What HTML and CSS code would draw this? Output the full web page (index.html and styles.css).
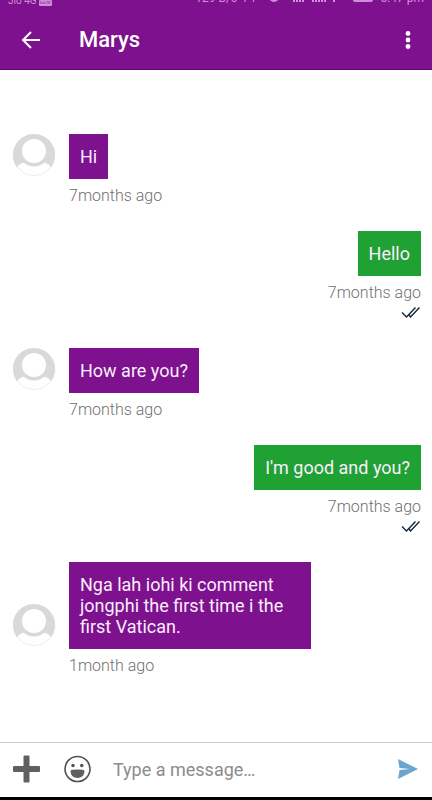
FILE: index.html
```
<!DOCTYPE html>
<html lang="en">
<head>
<meta charset="utf-8">
<meta name="viewport" content="width=device-width, initial-scale=1">
<title>Marys</title>
<link rel="stylesheet" href="styles.css">
</head>
<body>
<svg class="defs" aria-hidden="true">
  <symbol id="avatar" viewBox="0 0 42 42">
    <circle cx="21" cy="21" r="20.5" fill="#fff" stroke="#ededed"/>
    <path d="M21 0A21 21 0 0 0 4 33.500Q6 30 10.500 28.500Q15 32.500 21 32.500Q27 32.500 31.500 28.500Q36 30 38 33.500A21 21 0 0 0 21 0Z" fill="#d9d9d9"/>
    <circle cx="21" cy="17" r="12" fill="#fff"/>
  </symbol>
  <symbol id="ticks" viewBox="0 0 20 12">
    <path d="M1 6.500L5.500 11L14.500 1.500M7.500 8L9.500 11L18.500 1.500" fill="none" stroke="#14283c" stroke-width="1.400"/>
  </symbol>
</svg>
<header class="header">
  <div class="status">
    <div class="status-text"><span>Jio 4G</span><span class="volte">VoLTE</span></div>
    <div class="status-text status-right">
      <span class="speed">129 B/s 4 1</span>
      <svg class="alarm" viewBox="0 0 10 10" aria-hidden="true"><circle cx="5" cy="5" r="5" fill="currentColor"/></svg>
      <svg class="signal" viewBox="0 0 46 10" aria-hidden="true"><path d="M1 10V7M4 10V5M7 10V3M10 10V1M20 10V7M23 10V5M26 10V3M29 10V1M32 10V3M41 10V7" stroke="currentColor" stroke-width="2"/></svg>
      <svg class="battery" viewBox="0 0 20 10" aria-hidden="true"><rect width="20" height="10" rx="2" fill="currentColor"/></svg>
      <span>5:47 pm</span>
    </div>
  </div>
  <div class="toolbar">
    <button class="icon-button" aria-label="Back">
      <svg width="20" height="20" viewBox="0 0 20 20"><path d="M19 10H2.500M10 2L2 10L10 18" fill="none" stroke="#fff" stroke-width="2"/></svg>
    </button>
    <h1 class="title">Marys</h1>
    <button class="icon-button" aria-label="More options">
      <svg width="6" height="20" viewBox="0 0 6 20" fill="#fff"><circle cx="3" cy="3.500" r="2.400"/><circle cx="3" cy="10" r="2.400"/><circle cx="3" cy="16.500" r="2.400"/></svg>
    </button>
  </div>
</header>
<main class="chat">
  <article class="message incoming">
    <svg class="avatar" role="img" aria-label="Marys"><use href="#avatar"/></svg>
    <p class="bubble">Hi</p>
    <time class="time">7months ago</time>
  </article>
  <article class="message outgoing">
    <p class="bubble">Hello</p>
    <time class="time">7months ago</time>
    <svg class="ticks" role="img" aria-label="Read"><use href="#ticks"/></svg>
  </article>
  <article class="message incoming">
    <svg class="avatar" role="img" aria-label="Marys"><use href="#avatar"/></svg>
    <p class="bubble">How are you?</p>
    <time class="time">7months ago</time>
  </article>
  <article class="message outgoing">
    <p class="bubble">I'm good and you?</p>
    <time class="time">7months ago</time>
    <svg class="ticks" role="img" aria-label="Read"><use href="#ticks"/></svg>
  </article>
  <article class="message incoming">
    <svg class="avatar" role="img" aria-label="Marys"><use href="#avatar"/></svg>
    <p class="bubble">Nga lah iohi ki comment jongphi the first time i the first Vatican.</p>
    <time class="time">1month ago</time>
  </article>
</main>
<form class="composer">
  <button class="icon-button" type="button" aria-label="Add attachment">
    <svg width="28" height="28" viewBox="0 0 28 28"><path d="M10.500 1.500Q10.500 .5 11.500 .5H15.500Q16.500 .5 16.500 1.500V11H26Q27 11 27 12V16Q27 17 26 17H16.500V26.500Q16.500 27.500 15.500 27.500H11.500Q10.500 27.500 10.500 26.500V17H1Q0 17 0 16V12Q0 11 1 11H10.500Z" fill="#606060"/></svg>
  </button>
  <button class="icon-button" type="button" aria-label="Insert emoji">
    <svg width="28" height="28" viewBox="0 0 28 28"><circle cx="13.500" cy="14" r="12.500" fill="none" stroke="#505050" stroke-width="1.600"/><circle cx="9" cy="10.500" r="1.700" fill="#505050"/><circle cx="17.800" cy="10.500" r="1.700" fill="#505050"/><path d="M6.500 16.500Q6.500 14.800 8.500 14.800Q13.500 14.200 18.500 14.800Q20.500 14.800 20.500 16.500Q20 23 13.500 23Q7 23 6.500 16.500Z" fill="#606060"/></svg>
  </button>
  <input class="field" type="text" placeholder="Type a message…" aria-label="Message">
  <button class="icon-button" aria-label="Send">
    <svg width="20" height="20" viewBox="0 0 20 20"><path d="M0 0L20 10L0 20L1.500 11L12 10L1.500 9Z" fill="#6ba4cf"/></svg>
  </button>
</form>
</body>
</html>
```
FILE: styles.css
```
* {
  box-sizing: border-box;
}

body {
  display: flex;
  flex-direction: column;
  min-height: 100vh;
  margin: 0;
  background: #fff;
  color: #707070;
  font-family: Roboto, "Liberation Sans", sans-serif;
}

.defs {
  position: absolute;
  width: 0;
  height: 0;
}

.header {
  background: #7e118e;
  border-bottom: 1px solid #5c0a69;
  color: #fff;
}

.status {
  display: flex;
  align-items: flex-end;
  justify-content: space-between;
  height: 6px;
  padding: 0 8px;
  overflow: hidden;
  color: #cf8fd8;
  font-size: 10px;
  line-height: 10px;
}

.status-text {
  display: flex;
  align-items: flex-end;
  gap: 2px;
  white-space: nowrap;
}

.status-right {
  height: 12px;
  margin-bottom: 4px;
  font-size: 12px;
  line-height: 8px;
}

.speed {
  margin-right: 10px;
}

.volte {
  padding: 0 1px;
  border-radius: 1px;
  background: #cf8fd8;
  color: #7e118e;
  font-size: 4px;
  line-height: 6px;
}

.alarm {
  width: 10px;
  height: 10px;
}

.signal {
  width: 46px;
  height: 10px;
  margin: 0 12px;
}

.battery {
  width: 20px;
  height: 10px;
  margin-right: 6px;
}

.toolbar {
  display: flex;
  align-items: center;
  height: 63px;
  padding: 5px 21px 0;
}

.title {
  flex: 1;
  margin: 0 0 0 38px;
  font-size: 22px;
  font-weight: 500;
  line-height: 24px;
}

.icon-button {
  display: flex;
  flex: none;
  padding: 0;
  border: 0;
  background: none;
  cursor: pointer;
}

.chat {
  display: flex;
  flex: 1;
  flex-direction: column;
  gap: 26px;
  padding: 64px 11px 24px 13px;
}

.message {
  display: grid;
  row-gap: 7px;
}

.incoming {
  grid-template-columns: 42px 1fr;
  column-gap: 14px;
  justify-items: start;
}

.incoming .time {
  grid-column: 2;
}

.outgoing {
  justify-items: end;
}

.avatar {
  align-self: end;
  width: 42px;
  height: 42px;
  margin-bottom: 3px;
}

.bubble {
  max-width: 242px;
  margin: 0;
  padding: 12px 11px;
  background: #7e118e;
  color: #fbeefd;
  font-size: 18px;
  line-height: 21px;
}

.outgoing .bubble {
  background: #1fa233;
}

.time {
  font-size: 16px;
  font-weight: 300;
  line-height: 19px;
}

.ticks {
  width: 20px;
  height: 12px;
  margin: -3px 0 4px;
}

.composer {
  display: flex;
  align-items: center;
  height: 58px;
  padding: 0 14px 2px 13px;
  border-top: 1px solid #cfcfcf;
  border-bottom: 3px solid #000;
}

.composer .icon-button + .icon-button {
  margin-left: 23px;
}

.field {
  flex: 1;
  min-width: 0;
  margin: 0 12px 0 21px;
  padding: 2px 0 0;
  border: 0;
  outline: 0;
  background: none;
  color: #404040;
  font: 18px/24px Roboto, "Liberation Sans", sans-serif;
}

.field::placeholder {
  color: #8c8c8c;
}
```
